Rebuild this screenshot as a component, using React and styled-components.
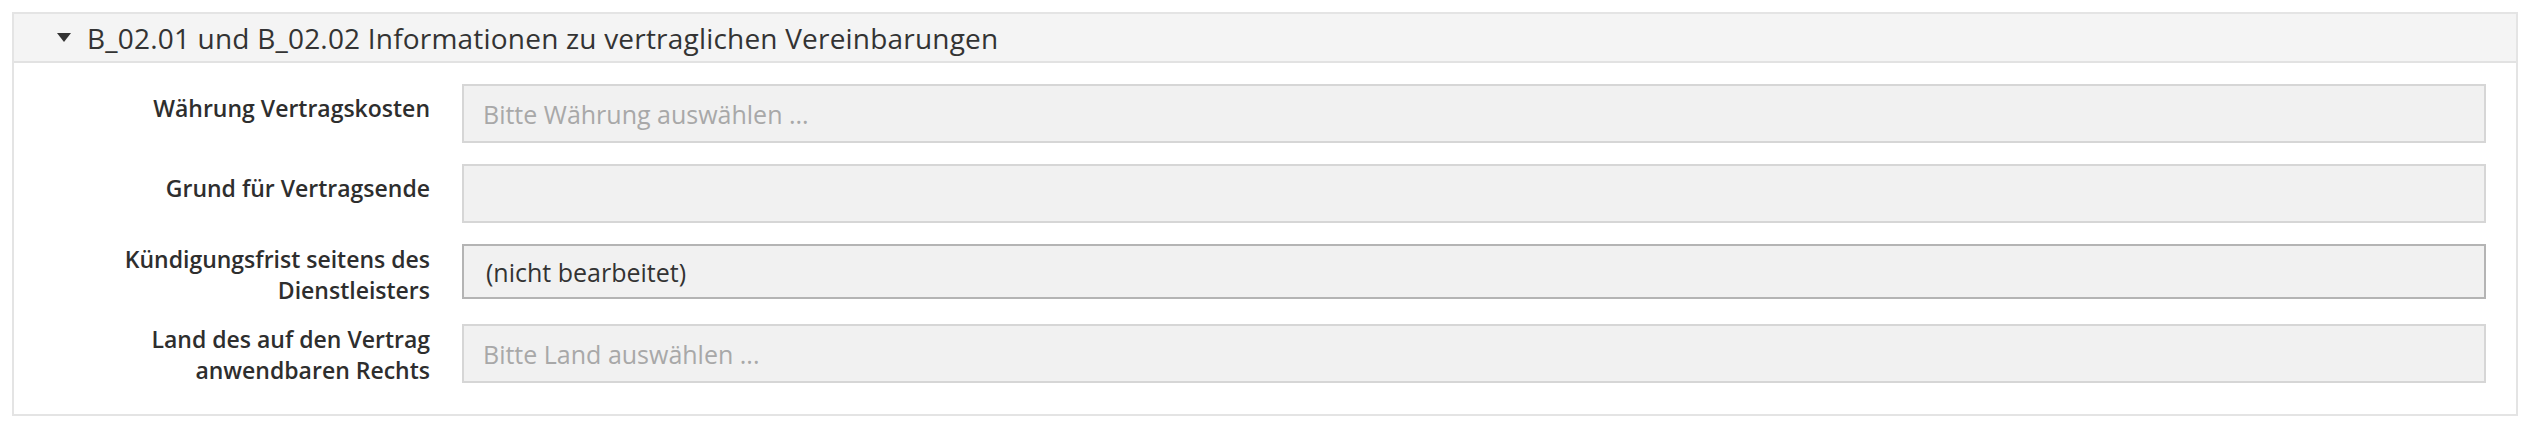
import React from "react";
import styled, { createGlobalStyle } from "styled-components";

const GlobalStyle = createGlobalStyle`
  html, body {
    margin: 0;
    padding: 0;
    background: #ffffff;
  }
  body {
    font-family: "Open Sans", "Noto Sans", Arial, sans-serif;
    color: #333333;
  }
`;

const Page = styled.div`
  padding: 12px 10px 10px 12px;
`;

const Panel = styled.section`
  border: 2px solid #e4e4e4;
  background: #ffffff;
`;

const PanelHeader = styled.header`
  display: flex;
  align-items: center;
  height: 47px;
  padding-left: 43px;
  gap: 16px;
  background: #f4f4f4;
  border-bottom: 2px solid #e2e2e2;
  font-size: 28px;
  letter-spacing: 0.2px;
  color: #333333;
  white-space: nowrap;
`;

const Caret = styled.svg`
  width: 14px;
  height: 9px;
  flex: none;
`;

const PanelBody = styled.div`
  display: flex;
  flex-direction: column;
  gap: 21px;
  padding: 21px 30px 31px 30px;
`;

const Row = styled.div`
  display: grid;
  grid-template-columns: 386px 1fr;
  column-gap: 32px;
  height: 59px;
  align-items: center;
`;

const Label = styled.label`
  box-sizing: border-box;
  padding-bottom: 10px;
  text-align: right;
  font-size: 23px;
  font-weight: 600;
  line-height: 31px;
  color: #2e2e2e;
`;

const Field = styled.div`
  box-sizing: border-box;
  align-self: start;
  height: ${(p) => (p.$editable ? "55px" : "59px")};
  display: flex;
  align-items: center;
  padding-left: ${(p) => (p.$editable ? "22px" : "19px")};
  background: #f1f1f1;
  border: 2px solid ${(p) => (p.$editable ? "#b4b4b4" : "#d6d6d6")};
  font-size: 25px;
  color: ${(p) => (p.$placeholder ? "#a8a8a8" : "#333333")};
  white-space: nowrap;
`;

const fields = [
  { label: "Währung Vertragskosten", value: "Bitte Währung auswählen ...", placeholder: true },
  { label: "Grund für Vertragsende", value: "", placeholder: true },
  { label: "Kündigungsfrist seitens des Dienstleisters", value: "(nicht bearbeitet)", editable: true },
  { label: "Land des auf den Vertrag anwendbaren Rechts", value: "Bitte Land auswählen ...", placeholder: true },
];

export default function App() {
  return (
    <>
      <GlobalStyle />
      <Page>
        <Panel>
          <PanelHeader>
            <Caret viewBox="0 0 14 9" aria-hidden="true">
              <polygon points="0,0 14,0 7,9" fill="#333333" />
            </Caret>
            <span>B_02.01 und B_02.02 Informationen zu vertraglichen Vereinbarungen</span>
          </PanelHeader>
          <PanelBody>
            {fields.map((f) => (
              <Row key={f.label}>
                <Label>{f.label}</Label>
                <Field $editable={f.editable} $placeholder={f.placeholder}>
                  {f.value}
                </Field>
              </Row>
            ))}
          </PanelBody>
        </Panel>
      </Page>
    </>
  );
}
